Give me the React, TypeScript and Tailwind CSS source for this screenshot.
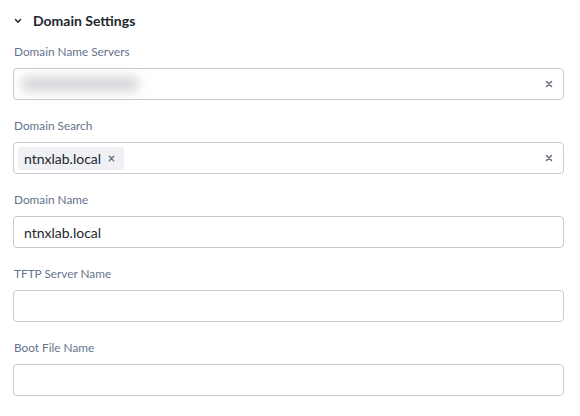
import React from "react";

const font = { fontFamily: "Lato, 'Open Sans', sans-serif" };

function Label({ children }: { children: React.ReactNode }) {
  return <div className="text-[11.8px] leading-[14px] text-[#66748a] mb-[9px] pl-[1px]">{children}</div>;
}

function ClearX() {
  return (
    <svg width="8" height="8" viewBox="0 0 8 8" className="shrink-0">
      <path d="M1.5 1.5 L6.5 6.5 M6.5 1.5 L1.5 6.5" stroke="#6a7280" strokeWidth="1.6" strokeLinecap="round" />
    </svg>
  );
}

function Box({ children, right }: { children?: React.ReactNode; right?: React.ReactNode }) {
  return (
    <div className="h-[32px] border border-[#c5cad3] rounded-[4px] bg-white flex items-center pl-[4px] pr-[10px]">
      <div className="flex-1 flex items-center min-w-0">{children}</div>
      {right}
    </div>
  );
}

export default function App() {
  return (
    <div className="w-[580px] h-[416px] bg-white text-[#22272e] pl-[13px] pr-[16px]" style={font}>
      <div className="h-[45px] flex items-center pb-[4px]">
        <svg width="8" height="6" viewBox="0 0 8 6" className="ml-[1px] mr-[11px]">
          <path d="M1.5 1.5 L4 4.2 L6.5 1.5" stroke="#22272e" strokeWidth="1.5" fill="none" strokeLinecap="round" strokeLinejoin="round" />
        </svg>
        <span className="text-[14px] font-bold text-[#22272e]">Domain Settings</span>
      </div>
      <div className="flex flex-col gap-[19px]">
        <div>
          <Label>Domain Name Servers</Label>
          <Box right={<ClearX />}>
            <div className="ml-[3px] h-[14px] w-[118px] rounded-full bg-[#d0d2d6] blur-[6px]" />
          </Box>
        </div>
        <div>
          <Label>Domain Search</Label>
          <Box right={<ClearX />}>
            <div className="h-[23px] w-[106px] bg-[#eff1f4] rounded-[2px] flex items-center pl-[6px] gap-[7px]">
              <span className="text-[14px]">ntnxlab.local</span>
              <svg width="7" height="7" viewBox="0 0 8 8">
                <path d="M1.5 1.5 L6.5 6.5 M6.5 1.5 L1.5 6.5" stroke="#6a7280" strokeWidth="1.6" strokeLinecap="round" />
              </svg>
            </div>
          </Box>
        </div>
        <div>
          <Label>Domain Name</Label>
          <Box>
            <span className="text-[14px] pl-[6px]">ntnxlab.local</span>
          </Box>
        </div>
        <div>
          <Label>TFTP Server Name</Label>
          <Box />
        </div>
        <div>
          <Label>Boot File Name</Label>
          <Box />
        </div>
      </div>
    </div>
  );
}
